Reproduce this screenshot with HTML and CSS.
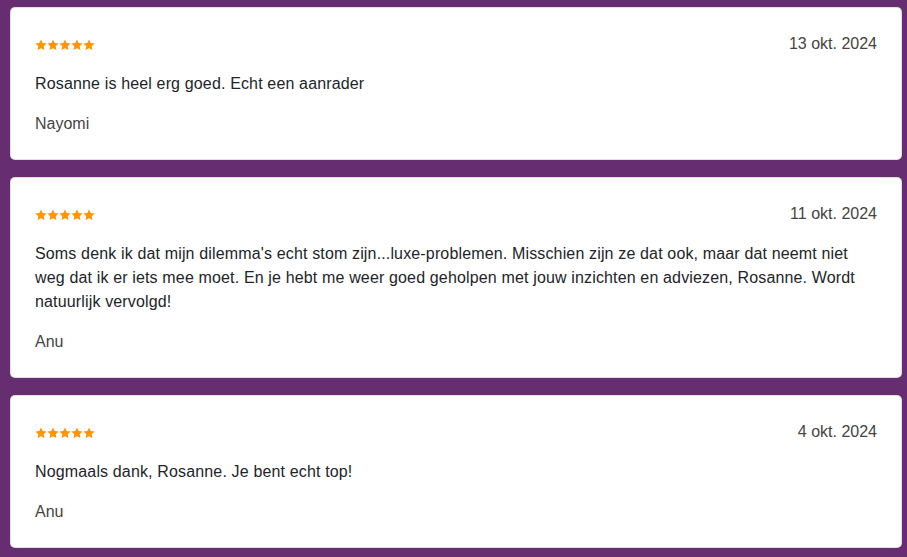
FILE: index.html
```html
<!DOCTYPE html>
<html lang="nl">
<head>
<meta charset="utf-8">
<link rel="stylesheet" href="styles.css">
</head>
<body>
<div class="list">
  <div class="card">
    <div class="head">
      <div class="stars">
        <svg viewBox="0 0 60 12" width="60" height="12"><g fill="#ff9500"><path id="s" d="M6 0.4l1.7 3.6 3.9.5-2.9 2.7.7 3.9L6 9.2 2.6 11.1l.7-3.9L.4 4.5l3.9-.5z"/><use href="#s" x="12"/><use href="#s" x="24"/><use href="#s" x="36"/><use href="#s" x="48"/></g></svg>
      </div>
      <div class="date">13 okt. 2024</div>
    </div>
    <p class="text">Rosanne is heel erg goed. Echt een aanrader</p>
    <p class="name">Nayomi</p>
  </div>
  <div class="card">
    <div class="head">
      <div class="stars">
        <svg viewBox="0 0 60 12" width="60" height="12"><g fill="#ff9500"><use href="#s"/><use href="#s" x="12"/><use href="#s" x="24"/><use href="#s" x="36"/><use href="#s" x="48"/></g></svg>
      </div>
      <div class="date">11 okt. 2024</div>
    </div>
    <p class="text">Soms denk ik dat mijn dilemma's echt stom zijn...luxe-problemen. Misschien zijn ze dat ook, maar dat neemt niet weg dat ik er iets mee moet. En je hebt me weer goed geholpen met jouw inzichten en adviezen, Rosanne. Wordt natuurlijk vervolgd!</p>
    <p class="name">Anu</p>
  </div>
  <div class="card">
    <div class="head">
      <div class="stars">
        <svg viewBox="0 0 60 12" width="60" height="12"><g fill="#ff9500"><use href="#s"/><use href="#s" x="12"/><use href="#s" x="24"/><use href="#s" x="36"/><use href="#s" x="48"/></g></svg>
      </div>
      <div class="date">4 okt. 2024</div>
    </div>
    <p class="text">Nogmaals dank, Rosanne. Je bent echt top!</p>
    <p class="name">Anu</p>
  </div>
</div>
</body>
</html>
```
FILE: styles.css
```css
html, body {
  margin: 0;
  padding: 0;
  background: #662d71;
}
body {
  font-family: "Liberation Sans", Arial, sans-serif;
  font-size: 16px;
  line-height: 24px;
  color: #212529;
}
.list {
  display: flex;
  flex-direction: column;
  gap: 17px;
  padding: 7px 5px 0 10px;
}
.card {
  background: #fff;
  border-radius: 5px;
  border: 1px solid rgba(0,0,0,0.12);
  padding: 24px 24px 23px;
  display: flex;
  flex-direction: column;
  gap: 16px;
}
.head {
  display: flex;
  justify-content: space-between;
  align-items: center;
  height: 24px;
}
.stars {
  display: flex;
  align-items: center;
  padding-top: 1px;
}
.stars svg { display: block; }
.date {
  color: #444;
}
.text, .name {
  margin: 0;
}
.text {
  letter-spacing: 0.15px;
}
.name {
  color: #444;
}
```
